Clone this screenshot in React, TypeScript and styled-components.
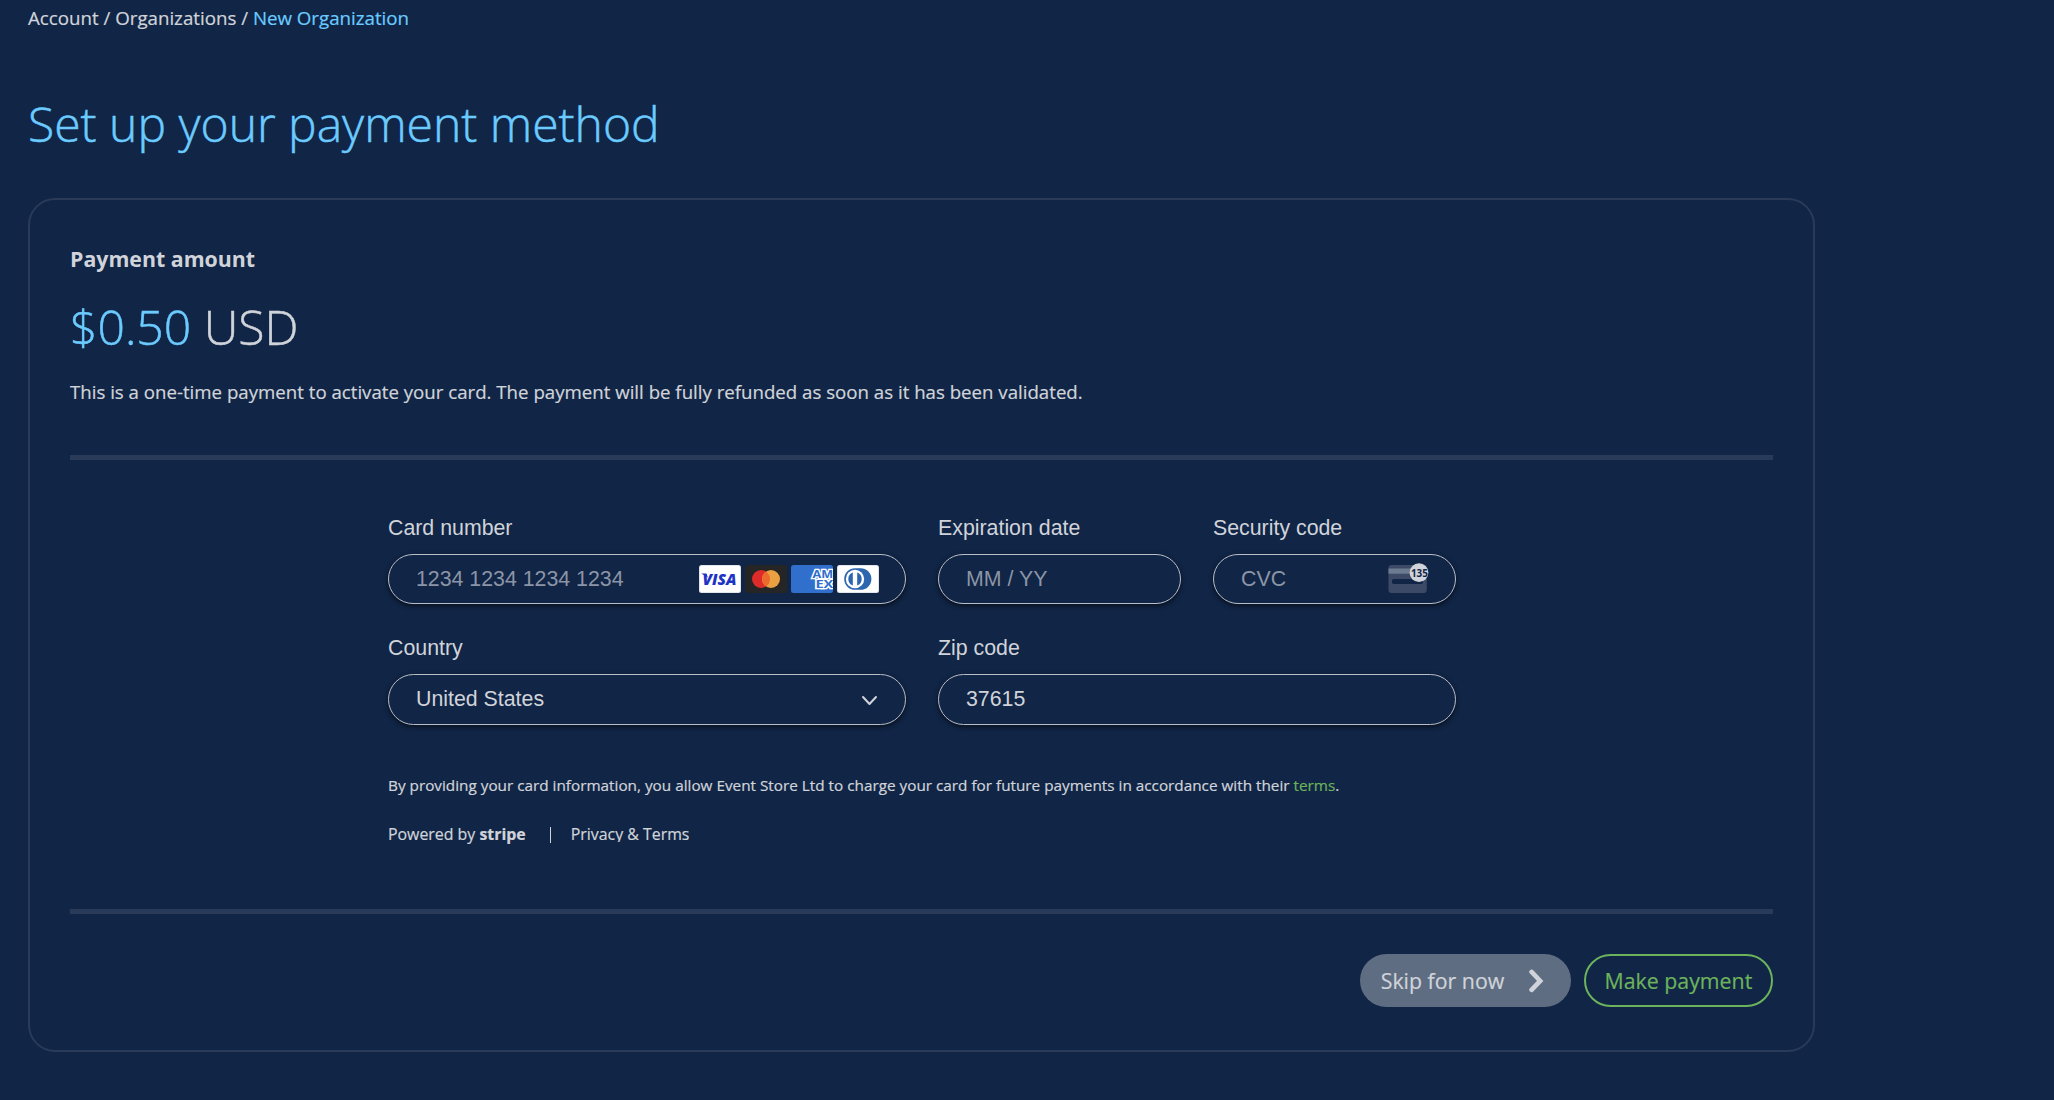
import React from 'react';
import styled, { createGlobalStyle, css } from 'styled-components';

const color = {
  bg: '#112546',
  text: '#d0d4da',
  muted: '#8c95a6',
  line: '#293b59',
  blue: '#6bcbff',
  green: '#6cb35c',
  grey: '#5f6d82',
};

const sans = '"Open Sans", sans-serif';
const field = '"Liberation Sans", Arial, sans-serif';

const GlobalStyle = createGlobalStyle`
  * { box-sizing: border-box; }
  body {
    margin: 0;
    background: ${color.bg};
    color: ${color.text};
    font-family: ${sans};
  }
`;

const Page = styled.main`
  min-height: 1100px;
  width: 1815px;
  padding: 6px 0 48px 28px;
`;

const Breadcrumbs = styled.nav`
  font-size: 18.72px;
  line-height: 24px;
  white-space: pre;
  -webkit-text-stroke: 0.2px;
`;

const Crumb = styled.a<{ $current?: boolean }>`
  color: ${(p) => (p.$current ? color.blue : color.text)};
`;

const Title = styled.h1`
  margin: 62px 0 42px;
  font-size: 48px;
  font-weight: 300;
  line-height: 64px;
  color: ${color.blue};
  -webkit-text-stroke: 0.5px;
`;

const Card = styled.section`
  height: 854px;
  border: 2px solid ${color.line};
  border-radius: 27px;
  padding: 45px 40px 0;
`;

const SectionHeading = styled.h2`
  margin: 0;
  font-size: 21.33px;
  font-weight: 700;
  line-height: 28px;
`;

const Amount = styled.p`
  margin: 22px 0 21px;
  font-size: 48.1px;
  font-weight: 300;
  line-height: 64px;
  -webkit-text-stroke: 0.5px;
`;

const Value = styled.span`
  color: ${color.blue};
`;

const Description = styled.p`
  margin: 0;
  font-size: 18.67px;
  line-height: 24px;
  -webkit-text-stroke: 0.2px;
`;

const Rule = styled.hr<{ $top: number }>`
  height: 5px;
  margin: ${(p) => p.$top}px 0 0;
  border: 0;
  background: ${color.line};
`;

const Form = styled.form`
  width: 1068px;
  margin: 56px 0 0 318px;
`;

const Fields = styled.div`
  display: grid;
  grid-template-columns: 518px 243px 243px;
  column-gap: 32px;
  row-gap: 32px;
`;

const Field = styled.div<{ $wide?: boolean }>`
  display: flex;
  flex-direction: column;
  gap: 14px;
  ${(p) => p.$wide && css`grid-column: span 2;`}
`;

const Label = styled.label`
  font: 21.33px/24px ${field};
`;

const Control = styled.div<{ $height?: number }>`
  display: flex;
  align-items: center;
  justify-content: space-between;
  height: ${(p) => p.$height ?? 50}px;
  padding: 0 26px 0 27px;
  border: 1px solid #b9bfc9;
  border-radius: 26px;
  box-shadow: 0 2px 4px rgba(0, 0, 0, 0.5), 0 1px 6px rgba(0, 0, 0, 0.12);
  background: ${color.bg};
`;

const Input = styled.input`
  flex: 1;
  min-width: 0;
  width: 0;
  padding: 0;
  border: 0;
  outline: 0;
  background: none;
  color: ${color.text};
  font: 21.33px/28px ${field};
  &::placeholder {
    color: ${color.muted};
    opacity: 1;
  }
`;

const ZipInput = styled(Input)`
  margin-bottom: 1px;
`;

const Selected = styled.span`
  margin-bottom: 1px;
  font: 21.33px/28px ${field};
`;

const Brands = styled.div`
  display: flex;
  gap: 4px;
`;

const Legal = styled.p`
  margin: 50px 0 0;
  font-size: 15.3px;
  line-height: 20px;
  white-space: nowrap;
  -webkit-text-stroke: 0.2px;
`;

const TermsLink = styled.a`
  color: ${color.green};
`;

const Powered = styled.div`
  display: flex;
  align-items: center;
  height: 20px;
  margin-top: 29px;
  font-size: 15.9px;
  line-height: 20px;
  white-space: pre;
  -webkit-text-stroke: 0.2px;
`;

const Divider = styled.span`
  width: 1px;
  height: 16px;
  margin: 2px 20px 0 24px;
  background: ${color.text};
`;

const PrivacyLink = styled.a`
  height: 18px;
  overflow: hidden;
  margin-top: -2px;
`;

const Actions = styled.div`
  display: flex;
  justify-content: flex-end;
  gap: 13px;
  margin-top: 40px;
`;

const Button = styled.button<{ $outline?: boolean }>`
  display: flex;
  align-items: center;
  justify-content: space-between;
  height: 53px;
  width: ${(p) => (p.$outline ? 189 : 211)}px;
  padding: 0 ${(p) => (p.$outline ? 17 : 27)}px 0 ${(p) => (p.$outline ? 18.5 : 20.7)}px;
  border: ${(p) => (p.$outline ? `2px solid ${color.green}` : '0')};
  border-radius: 27px;
  background: ${(p) => (p.$outline ? 'transparent' : color.grey)};
  color: ${(p) => (p.$outline ? color.green : color.text)};
  font: 21.33px/28px ${sans};
  white-space: nowrap;
  -webkit-text-stroke: 0.2px;
`;

const VisaIcon = () => (
  <svg width="42" height="28" viewBox="0 0 42 28">
    <rect width="42" height="28" rx="2.5" fill="#d9dde2" />
    <rect x="0.8" y="0.8" width="40.4" height="26.4" rx="2" fill="#fff" />
    <text x="3.5" y="19.6" fontFamily={sans} fontWeight="800" fontStyle="italic" fontSize="15.4" fill="#1c33c5" textLength="34" lengthAdjust="spacingAndGlyphs">
      VISA
    </text>
    <path d="M2.2 8.4h5.2l1.5 4z" fill="#1c33c5" />
  </svg>
);

const MastercardIcon = () => (
  <svg width="42" height="28" viewBox="0 0 42 28">
    <rect width="42" height="28" rx="2.5" fill="#252525" />
    <circle cx="16" cy="14" r="9" fill="#dc2b29" />
    <circle cx="26" cy="14" r="9" fill="#eba141" />
    <path d="M21 6.5a9 9 0 0 1 0 15a9 9 0 0 1 0-15z" fill="#ec6a2c" />
  </svg>
);

const AmexIcon = () => (
  <svg width="42" height="28" viewBox="0 0 42 28">
    <clipPath id="amex-tile">
      <rect width="42" height="28" rx="2.5" />
    </clipPath>
    <g clipPath="url(#amex-tile)">
      <rect width="42" height="28" fill="#306fcc" />
      <g fontFamily={sans} fontWeight="700" fontSize="10.6" fill="#306fcc" stroke="#fff" strokeWidth="2.6" paintOrder="stroke" strokeLinejoin="miter">
        <text x="21.6" y="13.3" textLength="20.6" lengthAdjust="spacingAndGlyphs">AM</text>
        <text x="24.4" y="22.7" textLength="18" lengthAdjust="spacingAndGlyphs">EX</text>
      </g>
    </g>
  </svg>
);

const DinersIcon = () => (
  <svg width="42" height="28" viewBox="0 0 42 28">
    <rect width="42" height="28" rx="2.5" fill="#d9dde2" />
    <rect x="0.8" y="0.8" width="40.4" height="26.4" rx="2" fill="#fff" />
    <path d="M18 3.2h5.6a10.8 10.8 0 0 1 0 21.6H18a10.8 10.8 0 0 1 0-21.6z" fill="#2c66ae" />
    <circle cx="18" cy="14" r="9.2" fill="#fff" />
    <path d="M15.8 7.6a6.8 6.8 0 0 0 0 12.8zM20.2 7.6a6.8 6.8 0 0 1 0 12.8z" fill="#2c66ae" />
  </svg>
);

const CvcIcon = () => (
  <svg width="41" height="32" viewBox="0 0 41 32">
    <clipPath id="cvc-badge">
      <circle cx="31" cy="9.7" r="9.4" />
    </clipPath>
    <path d="M3.5 2h32.2a3 3 0 0 1 3 3v22a3 3 0 0 1-3 3H3.5a3 3 0 0 1-3-3V5a3 3 0 0 1 3-3z" fill="#3c4a68" />
    <rect x="0.5" y="5.5" width="38.2" height="5.2" fill="#6d7a90" />
    <rect x="4" y="16" width="31" height="5" rx="1.8" fill={color.bg} />
    <circle cx="31" cy="9.7" r="9.4" fill={color.text} />
    <g clipPath="url(#cvc-badge)">
      <text x="22.9" y="13.7" fontFamily={sans} fontWeight="700" fontSize="11.2" fill={color.bg} textLength="17" lengthAdjust="spacingAndGlyphs">
        135
      </text>
    </g>
  </svg>
);

const ChevronDown = () => (
  <svg width="18" height="12" viewBox="0 0 18 12" fill="none" stroke={color.text} strokeWidth="2" strokeLinecap="round" strokeLinejoin="round">
    <path d="M2 3l6.5 7L15 3" />
  </svg>
);

const ChevronRight = () => (
  <svg width="16" height="24" viewBox="0 0 16 24" fill="none" stroke={color.text} strokeWidth="4.6" strokeLinecap="round" strokeLinejoin="miter">
    <path d="M3.6 2.9L12.2 11.9L3.6 20.9" />
  </svg>
);

export default function App() {
  return (
    <>
      <GlobalStyle />
      <Page>
        <Breadcrumbs>
          <Crumb>Account</Crumb> / <Crumb>Organizations</Crumb> / <Crumb $current>New Organization</Crumb>
        </Breadcrumbs>
        <Title>Set up your payment method</Title>
        <Card>
          <SectionHeading>Payment amount</SectionHeading>
          <Amount>
            <Value>$0.50</Value> USD
          </Amount>
          <Description>
            This is a one-time payment to activate your card. The payment will be fully refunded as soon as it has been validated.
          </Description>
          <Rule $top={51} />
          <Form>
            <Fields>
              <Field>
                <Label htmlFor="number">Card number</Label>
                <Control>
                  <Input id="number" placeholder="1234 1234 1234 1234" />
                  <Brands>
                    <VisaIcon />
                    <MastercardIcon />
                    <AmexIcon />
                    <DinersIcon />
                  </Brands>
                </Control>
              </Field>
              <Field>
                <Label htmlFor="expiry">Expiration date</Label>
                <Control>
                  <Input id="expiry" placeholder="MM / YY" />
                </Control>
              </Field>
              <Field>
                <Label htmlFor="cvc">Security code</Label>
                <Control>
                  <Input id="cvc" placeholder="CVC" />
                  <CvcIcon />
                </Control>
              </Field>
              <Field>
                <Label>Country</Label>
                <Control $height={51}>
                  <Selected>United States</Selected>
                  <ChevronDown />
                </Control>
              </Field>
              <Field $wide>
                <Label htmlFor="zip">Zip code</Label>
                <Control $height={51}>
                  <ZipInput id="zip" defaultValue="37615" />
                </Control>
              </Field>
            </Fields>
            <Legal>
              By providing your card information, you allow Event Store Ltd to charge your card for future payments in accordance with their{' '}
              <TermsLink>terms</TermsLink>.
            </Legal>
            <Powered>
              <span>
                Powered by <b>stripe</b>
              </span>
              <Divider />
              <PrivacyLink>Privacy &amp; Terms</PrivacyLink>
            </Powered>
          </Form>
          <Rule $top={65} />
          <Actions>
            <Button type="button">
              Skip for now
              <ChevronRight />
            </Button>
            <Button type="button" $outline>
              Make payment
            </Button>
          </Actions>
        </Card>
      </Page>
    </>
  );
}
